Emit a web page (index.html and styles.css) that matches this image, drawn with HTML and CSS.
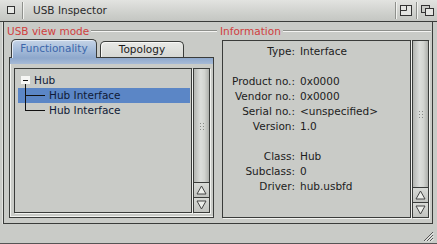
FILE: index.html
```html
<!DOCTYPE html>
<html lang="en">
<head>
    <meta charset="UTF-8">
    <title>USB Inspector</title>
    <link rel="stylesheet" href="styles.css">
</head>
<body>
    <div class="window">
        <div class="titlebar">
            <div class="gadget close">
                <svg width="9" height="9" viewBox="0 0 9 9"><rect x="0.5" y="0.5" width="7" height="7" fill="#e8e9e6" stroke="#333"/></svg>
            </div>
            <div class="title">USB Inspector</div>
            <div class="gadget zoom">
                <svg width="13" height="12" viewBox="0 0 13 12"><rect x="0.5" y="0.5" width="11" height="10" fill="#e4e5e2" stroke="#333"/><path d="M0.5 5.5H6.5V0.5" fill="none" stroke="#333"/></svg>
            </div>
            <div class="gadget depth">
                <svg width="13" height="12" viewBox="0 0 13 12"><rect x="0.5" y="0.5" width="8" height="7" fill="#c9cbc7" stroke="#333"/><rect x="4.5" y="3.5" width="8" height="7" fill="#e4e5e2" stroke="#333"/></svg>
            </div>
        </div>

        <div class="frame">
            <div class="group left">
                <div class="group-title"><span>USB view mode</span><i></i></div>
                <div class="tabs">
                    <div class="tab active">Functionality</div>
                    <div class="tab">Topology</div>
                </div>
                <div class="tabpage">
                    <div class="tabbar"></div>
                    <div class="page-body">
                        <div class="listbox">
                            <div class="row">
                                <div class="node"><span class="toggle"></span><span class="stem"></span></div>
                                <span class="label hub">Hub</span>
                            </div>
                            <div class="row selected">
                                <div class="branch"><span class="elbow"></span><span class="rest"></span></div>
                                <span class="label">Hub Interface</span>
                            </div>
                            <div class="row">
                                <div class="branch last"><span class="elbow"></span><span class="rest"></span></div>
                                <span class="label">Hub Interface</span>
                            </div>
                        </div>
                        <div class="scroller">
                            <div class="knob"><span class="grip"></span></div>
                            <div class="arrow"><svg width="11" height="10" viewBox="0 0 11 10"><path d="M5.5 1L10 9H1Z" fill="#eceeea" stroke="#444"/></svg></div>
                            <div class="arrow"><svg width="11" height="10" viewBox="0 0 11 10"><path d="M1 1H10L5.5 9Z" fill="#eceeea" stroke="#444"/></svg></div>
                        </div>
                    </div>
                </div>
            </div>

            <div class="group right">
                <div class="group-title"><span>Information</span><i></i></div>
                <div class="info-row">
                    <div class="infobox">
                        <div class="info">
                            <span class="key">Type:</span><span>Interface</span>
                            <span class="blank"></span>
                            <span class="key">Product no.:</span><span>0x0000</span>
                            <span class="key">Vendor no.:</span><span>0x0000</span>
                            <span class="key">Serial no.:</span><span>&lt;unspecified&gt;</span>
                            <span class="key">Version:</span><span>1.0</span>
                            <span class="blank"></span>
                            <span class="key">Class:</span><span>Hub</span>
                            <span class="key">Subclass:</span><span>0</span>
                            <span class="key">Driver:</span><span>hub.usbfd</span>
                        </div>
                    </div>
                    <div class="scroller">
                        <div class="knob"><span class="grip"></span></div>
                        <div class="arrow"><svg width="11" height="10" viewBox="0 0 11 10"><path d="M5.5 1L10 9H1Z" fill="#eceeea" stroke="#444"/></svg></div>
                        <div class="arrow"><svg width="11" height="10" viewBox="0 0 11 10"><path d="M1 1H10L5.5 9Z" fill="#eceeea" stroke="#444"/></svg></div>
                    </div>
                </div>
            </div>
        </div>

        <div class="bottombar">
            <svg class="sizer" width="11" height="11" viewBox="0 0 11 11">
                <path d="M1 10L10 1M4 10L10 4M7 10L10 7" stroke="#555" stroke-width="1"/>
                <path d="M2 10.5L10.5 2M5 10.5L10.5 5M8 10.5L10.5 8" stroke="#f4f4f2" stroke-width="1"/>
            </svg>
        </div>
    </div>
</body>
</html>
```

FILE: styles.css
```css
body {
    margin: 0;
    background-color: #c9cbc7;
    font-family: 'DejaVu Sans', sans-serif;
    font-size: 10.5px;
    color: #222;
}
.window {
    width: 437px;
    height: 244px;
    background-color: #c9cbc7;
    display: flex;
    flex-direction: column;
    overflow: hidden;
}

/* title bar */
.titlebar {
    height: 21px;
    border-bottom: 1px solid #3a3c3a;
    background: linear-gradient(#e2e3e0, #cfd1cd 60%, #c4c6c2);
    display: flex;
    align-items: stretch;
}
.gadget {
    display: flex;
    align-items: center;
    justify-content: center;
}
.gadget.close {
    width: 21px;
    border-right: 1px solid #8e908c;
    box-shadow: 1px 0 0 #f2f3f0;
    padding-left: 1px;
    margin: 2px 0;
}
.gadget.zoom {
    width: 20px;
    border-left: 1px solid #8e908c;
    box-shadow: inset 1px 0 0 #f2f3f0;
    margin: 2px 0;
}
.gadget.depth {
    width: 20px;
    border-left: 1px solid #8e908c;
    box-shadow: inset 1px 0 0 #f2f3f0;
    margin: 2px 0;
}
.title {
    flex: 1;
    padding-left: 10px;
    line-height: 21px;
    font-size: 10.5px;
    color: #2a2a2a;
}

/* window body */
.frame {
    margin: 0 4px 0 3px;
    border-left: 1px solid #3a3c3a;
    border-right: 1px solid #3a3c3a;
    border-bottom: 1px solid #3a3c3a;
    height: 201px;
    display: flex;
    padding-left: 3px;
    gap: 3px;
    box-shadow: -1px 0 0 #e2e3e0;
}
.group {
    display: flex;
    flex-direction: column;
}
.group.left {
    width: 210px;
}
.group.right {
    width: 211px;
}
.group-title {
    height: 18px;
    display: flex;
    align-items: center;
    color: #d0403e;
}
.group-title span {
    margin-right: 2px;
}
.group-title i {
    flex: 1;
    height: 0;
    border-top: 1px solid #8e908c;
    border-bottom: 1px solid #f4f4f2;
}

/* tabs */
.tabs {
    margin-left: 2px;
    width: 205px;
    height: 18px;
    padding-left: 2px;
    box-sizing: border-box;
    border-bottom: 1px solid #3a3c3a;
    display: flex;
    align-items: flex-end;
    gap: 3px;
}
.tab {
    border: 1px solid #3a3c3a;
    border-bottom: none;
    border-radius: 5px 5px 0 0;
    text-align: center;
    box-sizing: border-box;
}
.tab.active {
    width: 86px;
    height: 19px;
    margin-bottom: -1px;
    line-height: 17px;
    color: #3c66aa;
    background: linear-gradient(#c6d4e6, #a8bedb 50%, #8ea8cc);
    box-shadow: inset 1px 1px 0 #e4ecf6;
}
.tab:not(.active) {
    width: 84px;
    height: 16px;
    line-height: 15px;
    color: #1a1a1a;
    background: linear-gradient(#e8e9e6, #d6d8d4);
    box-shadow: inset 1px 1px 0 #f8f8f6;
}
.tabpage {
    margin-left: 2px;
    width: 205px;
    box-sizing: border-box;
    border: 1px solid #3a3c3a;
    border-top: none;
    flex: 1;
    display: flex;
    flex-direction: column;
    margin-bottom: 5px;
}
.tabbar {
    height: 6px;
    background: linear-gradient(#8ea8cc, #a6bad6);
}
.page-body {
    flex: 1;
    display: flex;
    padding: 4px 3px 4px 4px;
    box-shadow: inset 1px 0 0 #f2f3f0, inset 0 -1px 0 #f2f3f0;
}

/* tree list */
.listbox {
    flex: 1;
    border: 1px solid #3a3c3a;
    box-shadow: 1px 1px 0 #f2f3f0;
    padding-top: 4px;
    color: #101a36;
}
.row {
    height: 15px;
    margin: 0 1px 0 3px;
    display: flex;
    align-items: stretch;
}
.row.selected {
    background-color: #5b86c6;
}
.label {
    line-height: 15px;
    padding-left: 4px;
}
.node {
    margin-left: 3px;
    width: 9px;
    display: flex;
    flex-direction: column;
    align-items: center;
    padding-top: 3px;
}
.toggle {
    width: 9px;
    height: 8px;
    background-color: #f6f6f4;
    display: flex;
    align-items: center;
    justify-content: center;
}
.toggle::before {
    content: "";
    width: 5px;
    height: 1px;
    background-color: #111;
}
.stem {
    flex: 1;
    width: 1px;
    background-color: #111;
}
.branch {
    margin-left: 7px;
    width: 20px;
    display: flex;
    flex-direction: column;
}
.elbow {
    height: 7px;
    border-left: 1px solid #111;
    border-bottom: 1px solid #111;
}
.rest {
    flex: 1;
    border-left: 1px solid #111;
}
.branch.last .rest {
    border-left: none;
}

/* scrollers */
.scroller {
    width: 17px;
    margin-left: 1px;
    box-sizing: border-box;
    border: 1px solid #3a3c3a;
    box-shadow: 1px 1px 0 #f2f3f0;
    display: flex;
    flex-direction: column;
}
.knob {
    flex: 1;
    background: linear-gradient(to right, #b4b6b2, #dcdedb 45%, #d2d4d0 70%, #aeb0ac);
    display: flex;
    align-items: center;
    justify-content: center;
}
.grip {
    width: 5px;
    height: 8px;
    background-image: radial-gradient(circle, #8a8c88 0.8px, transparent 1px);
    background-size: 3px 3px;
}
.arrow {
    height: 15px;
    border-top: 1px solid #3a3c3a;
    box-sizing: border-box;
    background: linear-gradient(#d8dad6, #c2c4c0);
    display: flex;
    align-items: center;
    justify-content: center;
}

/* information panel */
.info-row {
    display: flex;
    height: 178px;
}
.infobox {
    margin-left: 2px;
    width: 189px;
    box-sizing: border-box;
    border: 1px solid #3a3c3a;
    box-shadow: 1px 1px 0 #f2f3f0;
    padding-top: 3px;
}
.info {
    display: grid;
    grid-template-columns: 72px auto;
    column-gap: 5px;
    line-height: 15px;
    color: #1c1c1c;
}
.info .key {
    text-align: right;
}
.info .blank {
    grid-column: 1 / 3;
    height: 15px;
}

/* bottom border */
.bottombar {
    flex: 1;
    border-bottom: 1px solid #555;
    display: flex;
    justify-content: flex-end;
    align-items: flex-end;
    padding: 0 3px 1px 0;
}
```
